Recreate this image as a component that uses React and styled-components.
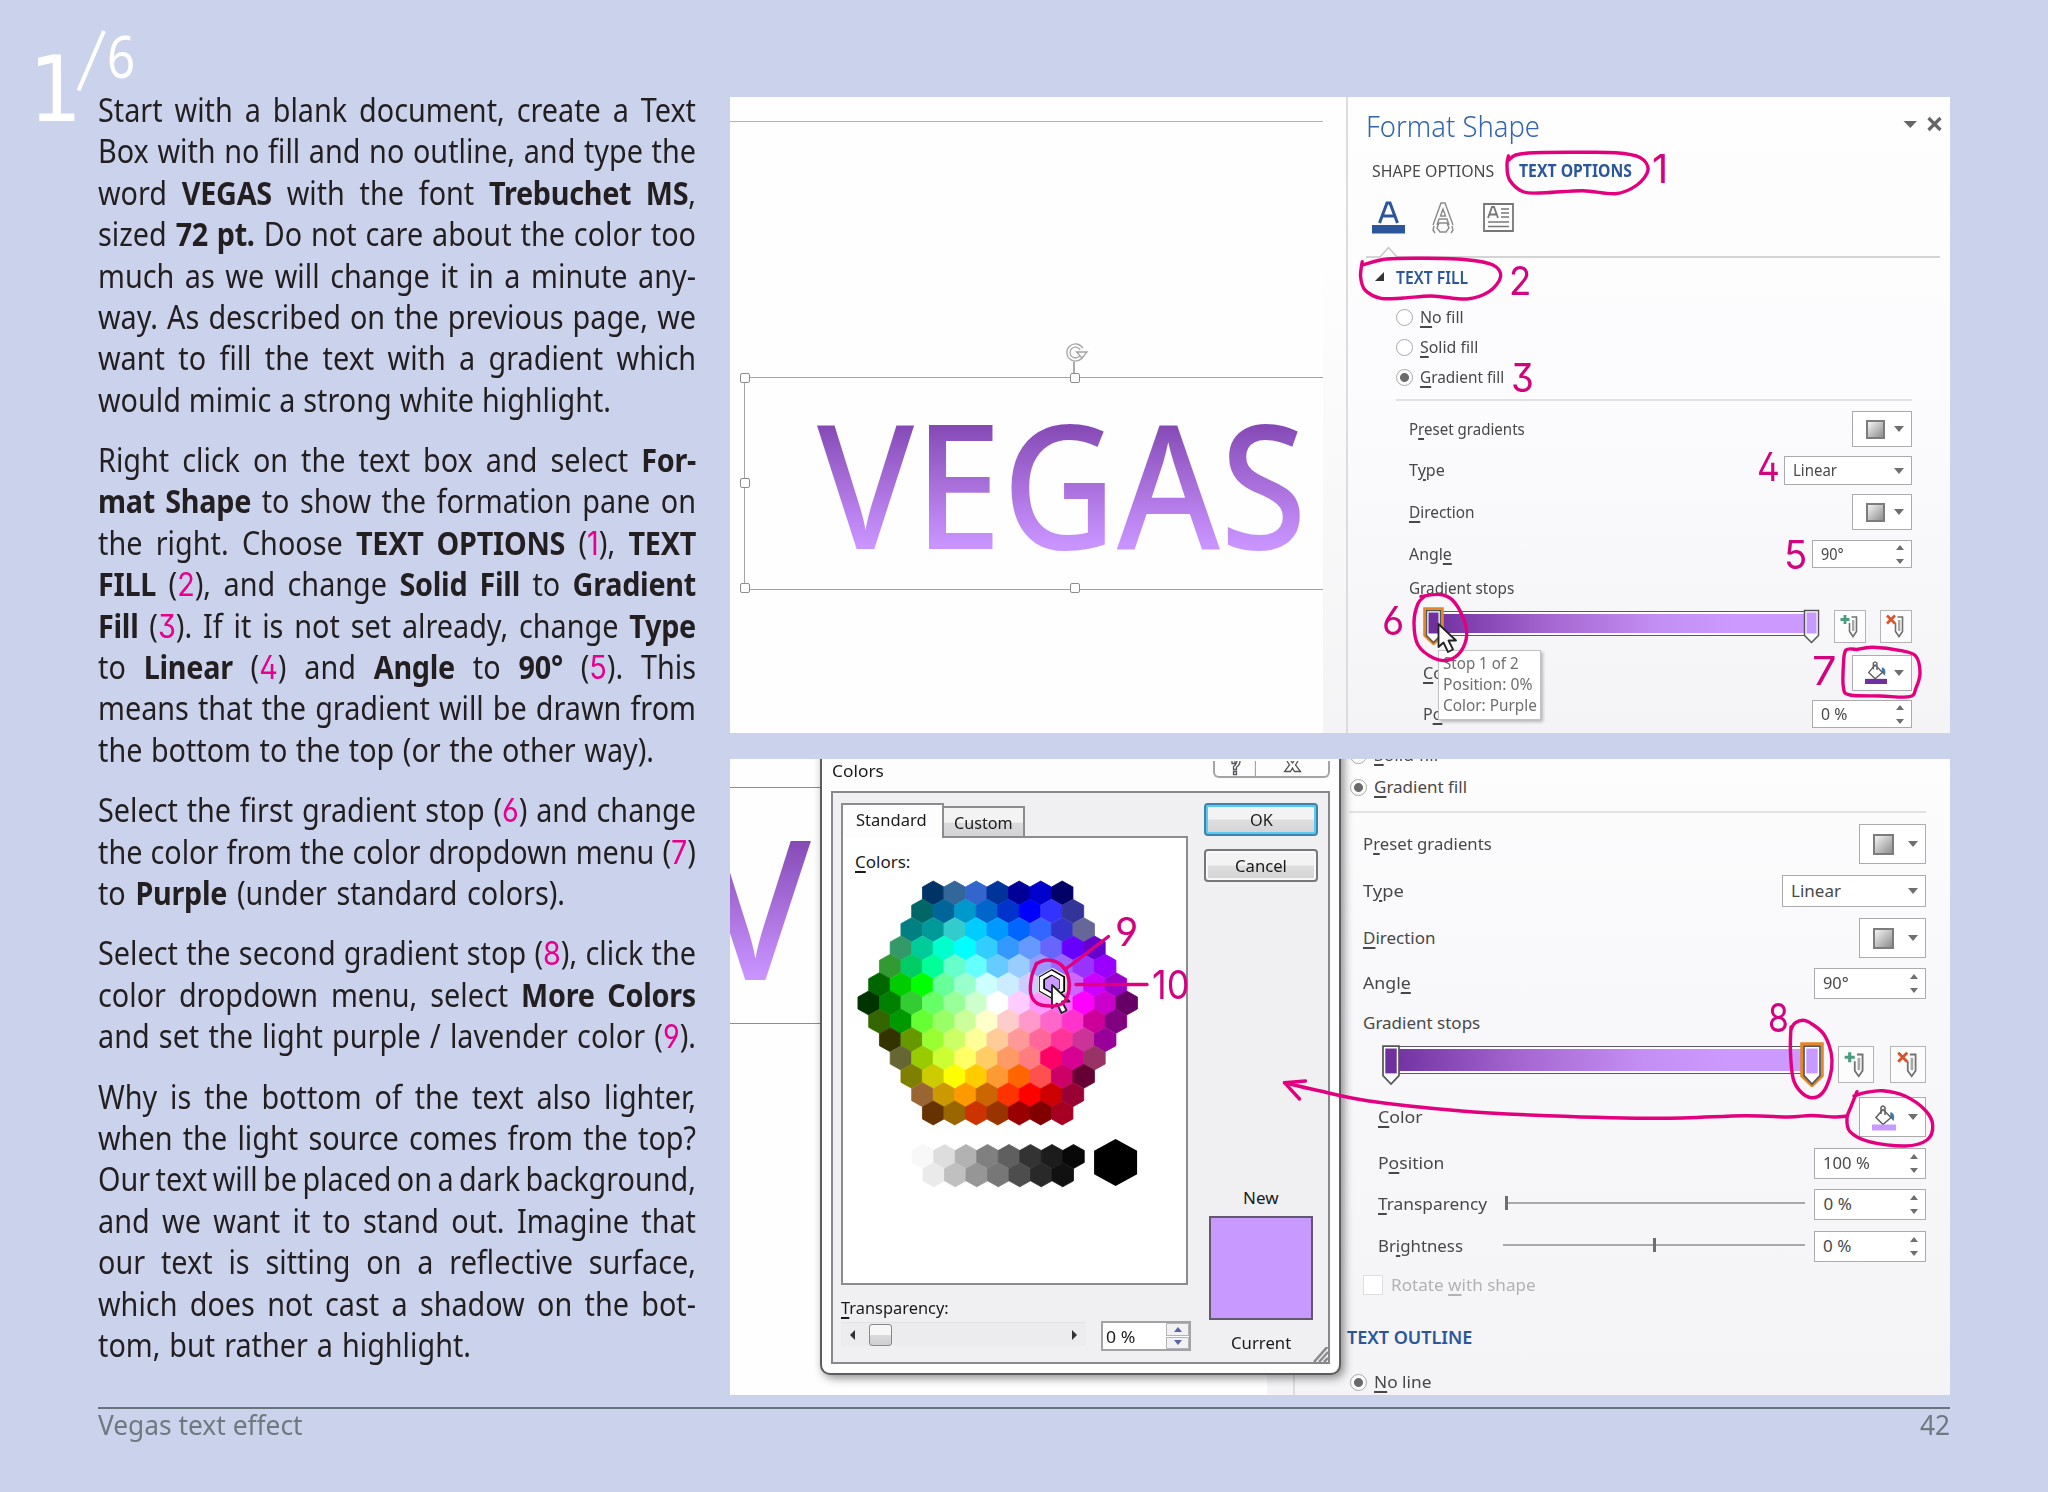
import React, { useLayoutEffect, useRef, useState } from 'react'
import styled, { createGlobalStyle } from 'styled-components'

const GlobalStyle = createGlobalStyle`
* { box-sizing: border-box; }
body {
    margin: 0;
    background: #cbd2ec;
    font-family: "Noto Sans", "Open Sans", sans-serif;
}
`

const ink = '#e3007f'

/* ---------- text helpers ---------- */

const FitBox = styled.span`
display: inline-block;
width: ${p => p.$w}px;
white-space: nowrap;
flex: none;
`
const FitInner = styled.span`
display: inline-block;
transform-origin: 0 50%;
`

// squeezes or stretches its text to the given width
const Fit = ({ w, children }) => {
    const ref = useRef(null)
    const [scale, setScale] = useState(1)
    useLayoutEffect(() => {
        setScale(w / ref.current.offsetWidth)
    }, [w])
    return (
        <FitBox $w={w}>
            <FitInner ref={ref} style={{ transform: `scaleX(${scale})` }}>{children}</FitInner>
        </FitBox>
    )
}

const LineBox = styled.div`
height: 41.38px;
line-height: 41.38px;
white-space: nowrap;
text-align: justify;
text-align-last: justify;
word-spacing: -2.5px;
transform-origin: 0 50%;
b { letter-spacing: -.3px; }
`

// one justified line of the narrow body face
const Line = ({ w = 598, children }) => {
    const ref = useRef(null)
    const [scale, setScale] = useState(0.9)
    useLayoutEffect(() => {
        setScale(Math.min(0.9, w / (ref.current.offsetWidth + 1)))
    }, [w])
    return (
        <LineBox style={{ width: w / scale, transform: `scaleX(${scale})` }}>
            <span ref={ref}>{children}</span>
        </LineBox>
    )
}

/* ---------- page ---------- */

const Page = styled.div`
position: relative;
width: 2048px;
height: 1492px;
padding: 0 98px;
overflow: hidden;
`
const Spread = styled.div`
display: flex;
justify-content: space-between;
height: 1407px;
width: 1852px;
`
const Article = styled.div`
width: 598px;
padding-top: 89px;
font-size: 32px;
color: #231f20;
`
const Paragraph = styled.div`
margin-bottom: 19.1px;
`
const Num = styled.span`
font-family: "Inter", sans-serif;
font-weight: 400;
font-feature-settings: "ss01";
color: #e6008c;
`
const Figures = styled.div`
width: 1220px;
padding-top: 97px;
display: flex;
flex-direction: column;
gap: 26px;
`
const Figure = styled.div`
position: relative;
display: flex;
height: 636px;
overflow: hidden;
background: #fefefe;
color: #444;
font-size: 17px;
`
const Footer = styled.div`
display: flex;
justify-content: space-between;
width: 1852px;
border-top: 2px solid #66757c;
font-size: 28px;
line-height: 31px;
color: #6d7a80;
`
const StepNumber = styled.div`
position: absolute;
left: 29px;
top: 22px;
display: flex;
color: #fff;
`
const StepCurrent = styled.span`
font: 91px/106px "DejaVu Sans", sans-serif;
padding-top: 15px;
`
const StepSlash = styled.svg`
width: 30px;
height: 62px;
margin: 8px 0 0 -5px;
`
const StepTotal = styled.span`
font-size: 58px;
line-height: 64px;
margin: 2px 0 0 0;
`

/* ---------- document canvas ---------- */

const Canvas = styled.div`
position: relative;
width: ${p => p.$w}px;
flex: none;
`
const PageEdge = styled.div`
position: absolute;
left: 0;
right: 0;
top: ${p => p.$y}px;
height: 1px;
background: ${p => p.$dark ? '#8d8d8d' : '#b3b3b3'};
`
const TextFrame = styled.div`
position: absolute;
left: 14px;
top: 280px;
width: 579px;
height: 213px;
border: 1.5px solid #a4a4a4;
border-right: 0;
`
const Handle = styled.i`
position: absolute;
left: ${p => p.$x}px;
top: ${p => p.$y}px;
width: 10px;
height: 10px;
border: 1.5px solid #8c8c8c;
border-radius: 2px;
background: #fff;
`
const Rotate = styled.svg`
position: absolute;
left: 318px;
top: -37px;
width: 26px;
height: 37px;
`
const WordArt = styled.div`
position: absolute;
left: ${p => p.$x}px;
top: ${p => p.$y}px;
font-size: ${p => p.$size}px;
font-weight: 500;
line-height: 1;
white-space: nowrap;
${FitInner} {
    color: transparent;
    background: linear-gradient(#8549b6 17%, #8f55c0 27%, #b178e4 60%, #c994ff 87%);
    -webkit-background-clip: text;
    background-clip: text;
}
`
const Gutter = styled.div`
width: ${p => p.$w}px;
flex: none;
background: linear-gradient(#fefefe 25%, #f4f3f5);
`

/* ---------- format pane ---------- */

const Pane = styled.div`
flex: 1;
min-width: 0;
border-left: 2px solid #dcdcde;
padding: 0 ${p => p.$right}px 0 ${p => p.$left}px;
background: ${p => p.$low ? 'linear-gradient(#fdfdfd, #f9f8fb 30%, #f4f3f5)' : 'linear-gradient(#fefefe, #fcfbfd 45%, #f4f3f6)'};
`
const PaneBody = styled.div`
padding: ${p => p.$low ? '0 0 0 13px' : '0 28px 0 43px'};
`
const Row = styled.div`
display: flex;
align-items: center;
justify-content: ${p => p.$spread ? 'space-between' : 'flex-start'};
height: ${p => p.$h}px;
margin-top: ${p => p.$mt || 0}px;
padding-left: ${p => p.$in || 0}px;
gap: ${p => p.$gap || 0}px;
`
const Push = styled.div`
flex: 1;
`
const Title = styled.div`
font-size: 28.5px;
font-weight: 300;
color: #3565ae;
`
const TitleIcons = styled.svg`
width: 40px;
height: 24px;
margin-bottom: 5px;
overflow: visible;
`
const Section = styled.div`
margin-left: ${p => p.$ml || 0}px;
font-weight: 600;
font-size: ${p => p.$size || 17}px;
color: #2b579a;
`
const TabLabel = styled.div`
color: ${p => p.$on ? '#2b579a' : '#484848'};
font-weight: ${p => p.$on ? 700 : 400};
`
const Label = styled.div`
margin-bottom: 2px;
color: ${p => p.$off ? '#b2b2b4' : '#484848'};
u { text-underline-offset: 3px; text-decoration-thickness: 1.5px; }
`
const Radio = styled.i`
width: 17px;
height: 17px;
border: 1.5px solid #a9a9a9;
border-radius: 50%;
margin-right: 7px;
background: ${p => p.$on ? 'radial-gradient(#6a6a6a 0 4px, #fff 5px)' : '#fff'};
`
const Rule = styled.div`
height: 2px;
margin-top: ${p => p.$mt}px;
margin-left: ${p => p.$in}px;
background: #e2e2e4;
`
const Field = styled.div`
display: flex;
align-items: center;
justify-content: space-between;
width: ${p => p.$w}px;
height: 100%;
padding: 0 7px 0 8px;
border: 1.5px solid #ababad;
background: #fff;
color: ${p => p.$dark ? '#262626' : '#484848'};
`
const Arrow = styled.i`
width: 0;
height: 0;
border: 5px solid transparent;
border-top: 6px solid #6f6f6f;
border-bottom: 0;
`
const Spinner = styled.div`
display: flex;
flex-direction: column;
gap: 9px;
i { border-width: 4px; border-top-width: 5px; border-bottom: 0; }
i:first-child { transform: scaleY(-1); }
`
const Swatch = styled.i`
width: ${p => p.$s}px;
height: ${p => p.$s}px;
margin-left: 5px;
border: 2px solid #7c7c7e;
background: linear-gradient(135deg, #f4f4f4, #8e8e90);
`
const SquareButton = styled.div`
display: grid;
place-items: center;
flex: none;
width: ${p => p.$w}px;
height: ${p => p.$h}px;
border: 1.5px solid #b4b4b6;
background: #fcfcfd;
`
const Shift = styled.div`
margin-left: 4px;
height: 27px;
`
const Track = styled.div`
position: relative;
flex: none;
width: ${p => p.$w}px;
height: 100%;
`
const Ramp = styled.div`
margin: ${p => p.$y}px 8px 0;
height: ${p => p.$h}px;
border: 1.5px solid #5d5464;
padding: 2px 0;
background: linear-gradient(90deg, #7030a0, #a465d0 30%, #c48ff4 60%, #cc99ff 80%) content-box, #fff;
`
const Marker = styled.svg`
position: absolute;
top: 0;
${p => p.$end ? 'right: -3px;' : 'left: -2px;'}
width: ${p => p.$w}px;
height: 100%;
`
const SliderLine = styled.div`
position: relative;
width: 302px;
height: 2px;
background: #a9a9ab;
margin-bottom: 3px;
`
const SliderThumb = styled.i`
position: absolute;
left: ${p => p.$x}px;
top: -6px;
width: 2.5px;
height: 14px;
background: #6e6e70;
`
const CheckBox = styled.i`
width: 20px;
height: 20px;
margin-right: 8px;
border: 1.5px solid #dedee0;
background: #fff;
`
const Tooltip = styled.div`
position: absolute;
left: 708px;
top: 553px;
width: 103px;
height: 70px;
padding: 2px 4px;
border: 1.5px solid #c2c2c4;
background: #fff;
box-shadow: 2px 2px 3px rgba(0, 0, 0, .25);
color: #6e6e70;
font-size: 16.5px;
line-height: 20.8px;
`
const Overlay = styled.svg`
position: absolute;
inset: 0;
width: 1220px;
height: 636px;
`
const Digit = styled.span`
position: absolute;
left: ${p => p.$x - 730}px;
top: ${p => p.$y - p.$top}px;
font-family: "Inter", sans-serif;
font-feature-settings: "ss01";
font-size: 40px;
line-height: 29px;
font-weight: 400;
color: #d0047f;
`

/* ---------- colors dialog ---------- */

const Dialog = styled.div`
position: absolute;
left: 90px;
top: -20px;
width: 521px;
height: 636px;
border: 2px solid #5d5d60;
border-radius: 0 0 10px 10px;
padding: 20px 9px 9px;
background: #fdfdfe;
box-shadow: 3px 3px 10px rgba(0, 0, 0, .45);
display: flex;
flex-direction: column;
color: #1a1a1a;
`
const DialogHead = styled.div`
display: flex;
justify-content: space-between;
align-items: flex-start;
height: 30px;
padding-left: 1px;
line-height: 19px;
`
const CaptionButtons = styled.div`
display: grid;
grid-template-columns: 41px 72px;
height: 17px;
border: 2px solid #a4a4a7;
border-top: 0;
border-radius: 0 0 6px 6px;
svg { display: block; margin: 0 auto; }
`
const DialogBody = styled.div`
position: relative;
flex: 1;
display: flex;
justify-content: space-between;
padding: 10px 10px 0 8px;
border: 2px solid #88888c;
background: #f0eff1;
`
const LeftSide = styled.div`
width: 350px;
`
const Tabs = styled.div`
display: flex;
align-items: flex-end;
height: 33px;
`
const Tab = styled.div`
position: relative;
display: flex;
justify-content: center;
align-items: center;
width: ${p => p.$on ? 103 : 81}px;
height: ${p => p.$on ? 35 : 30}px;
margin-bottom: ${p => p.$on ? -2 : 0}px;
padding-bottom: ${p => p.$on ? 5 : 0}px;
padding-right: ${p => p.$on ? 2 : 0}px;
z-index: ${p => p.$on ? 1 : 0};
border: 2px solid #8c8c90;
border-bottom: 0;
border-left-width: ${p => p.$on ? 2 : 0}px;
background: ${p => p.$on ? '#fdfdfd' : 'linear-gradient(#f3f3f4 50%, #dadadc 55%, #d4d4d6)'};
`
const Palette = styled.div`
width: 347px;
height: 449px;
border: 2px solid #8c8c90;
background: #fff;
padding: 11px 12px;
`
const Honeycomb = styled.svg`
display: block;
width: 318px;
height: 318px;
margin-top: 2px;
`
const DialogLabel = styled.div`
height: 22px;
line-height: 22px;
margin-top: ${p => p.$mt || 0}px;
u { text-underline-offset: 3px; text-decoration-thickness: 1.5px; }
`
const RightSide = styled.div`
width: 114px;
display: flex;
flex-direction: column;
align-items: center;
`
const Button = styled.div`
display: flex;
justify-content: center;
align-items: center;
width: 114px;
height: 33px;
margin-bottom: 13px;
border: ${p => p.$primary ? '2px solid #3d83ad' : '2px solid #77777a'};
border-radius: 4px;
box-shadow: inset 0 0 0 2px ${p => p.$primary ? '#5bc9f0' : '#f8f8f9'};
background: linear-gradient(#f3f3f4 48%, #dededf 52%, #d3d3d5);
`
const Spacer = styled.div`
height: ${p => p.$h}px;
`
const CurrentColor = styled.div`
width: 104px;
height: 104px;
border: 2px solid #63576f;
background: #c899ff;
`
const ScrollRow = styled.div`
display: flex;
justify-content: space-between;
align-items: center;
height: 30px;
margin-top: 2px;
`
const Scroll = styled.div`
display: flex;
align-items: center;
width: 245px;
height: 24px;
padding: 0 9px;
margin-bottom: 4px;
background: #ecebed;
border-top: 1px solid #e2e1e3;
`
const ScrollThumb = styled.i`
width: 23px;
height: 22px;
margin-left: 14px;
border: 1.5px solid #88888b;
border-radius: 3px;
background: linear-gradient(#f6f6f7 48%, #d9d9db 52%, #cfcfd1);
`
const SideArrow = styled.i`
border: 5px solid transparent;
${p => p.$left ? 'border-right-color: #333; border-left: 0;' : 'border-left-color: #333; border-right: 0;'}
`
const NumberBox = styled.div`
display: flex;
justify-content: space-between;
align-items: center;
width: 90px;
height: 30px;
padding-left: 3px;
border: 2px solid #a2a2a6;
background: #fff;
`
const StepButtons = styled.div`
display: grid;
grid-template-rows: 1fr 1fr;
gap: 1px;
width: 23px;
height: 26px;
div {
    display: grid;
    place-items: center;
    border: 1.5px solid #b4b4b8;
    background: #f1f1f3;
}
i { border-top-color: #5a62a8; border-width: 4px; border-top-width: 5px; border-bottom: 0; }
div:first-child i { transform: scaleY(-1); }
`
const Grip = styled.svg`
position: absolute;
right: 0;
bottom: 0;
width: 15px;
height: 15px;
`

/* ---------- drawings ---------- */

// smooth pen stroke through a list of points
const stroke = (pts) => {
    let d = `M${pts[0]}`
    for (let i = 0; i < pts.length - 1; i++) {
        const a = pts[i - 1] || pts[i]
        const b = pts[i]
        const c = pts[i + 1]
        const e = pts[i + 2] || c
        d += `C${b[0] + (c[0] - a[0]) / 6},${b[1] + (c[1] - a[1]) / 6} ${c[0] - (e[0] - b[0]) / 6},${c[1] - (e[1] - b[1]) / 6} ${c}`
    }
    return d
}

const firstStrokes = [
    [[1508.4, 156], [1507, 165], [1509.6, 180], [1524, 192], [1546, 192.7], [1583, 190.7], [1615.7, 193.7], [1637, 185], [1648, 170], [1640, 157.5], [1615.7, 152.7], [1575, 152.3], [1534, 152.7], [1515.7, 155], [1509, 160]],
    [[1362.2, 261.7], [1360.6, 276.7], [1365, 290], [1381, 298.3], [1403.5, 298], [1432, 296], [1466.7, 299], [1489, 291.7], [1500.6, 276.7], [1493, 265], [1468.8, 260], [1428, 258.3], [1387, 259], [1364, 264.5]],
    [[1425, 596], [1417.8, 604], [1414, 623], [1418, 645], [1434, 658.3], [1448.4, 660], [1460.6, 651.7], [1466.7, 635], [1462.7, 616.7], [1452.4, 600], [1440, 594.5], [1421, 596.5]],
    [[1857, 649.5], [1846, 650], [1843.5, 663.3], [1843.5, 688], [1850, 695], [1881, 696], [1909.6, 696.7], [1916, 688], [1920, 673], [1915.7, 656], [1901, 650.7], [1873, 647.3], [1857, 649.5]],
]
const secondStrokes = [
    [[1791, 1027], [1790.4, 1050], [1793, 1078], [1800, 1091], [1811, 1097.7], [1822.4, 1093], [1830, 1076.7], [1832, 1060], [1829, 1045], [1821.8, 1031.7], [1805.5, 1020.7], [1795, 1023], [1791, 1030]],
    [[1857, 1091.7], [1851, 1106.7], [1847, 1118], [1850, 1131.7], [1869, 1141.7], [1905, 1146], [1927, 1140], [1932.7, 1125], [1925, 1110], [1905, 1096], [1882.7, 1090.7], [1865, 1092.7], [1854, 1096]],
    [[1847, 1116], [1835, 1117], [1811, 1115.5], [1788, 1117], [1744, 1115.7], [1659.5, 1118.3], [1548, 1115.7], [1458.6, 1110.7], [1369, 1101], [1315.7, 1090], [1284.5, 1082.7]],
    [[1036.7, 963.3], [1031.7, 976.7], [1030.7, 993.3], [1036.7, 1003], [1050, 1006], [1063, 1003], [1069, 990], [1067.7, 975], [1060, 964], [1046.7, 960], [1036, 964]],
]

const Pointer = ({ x, y }) => (
    <path
        d={`M${x},${y}v23l5,-4.500l4.500,9.500l5,-2.500l-4.500,-9h7.500z`}
        fill="#fff" stroke="#222" strokeWidth="1.8"
    />
)

const StopMarker = ({ color, on, end, w }) => (
    <Marker viewBox="0 0 21 38" preserveAspectRatio="none" $w={w} $end={end}>
        {on && <path d="M1.500,1.500h18v27l-9,8.500l-9,-8.500z" fill="#fff" stroke="#e2862a" strokeWidth="2.600" />}
        <path d="M3.500,3.500h14v25l-7,7l-7,-7z" fill="#fff" stroke="#555" strokeWidth="1.500" />
        <path d="M5.500,5.500h10v21h-10z" fill={color} />
    </Marker>
)

const ClipIcon = ({ remove, s }) => (
    <svg width={22 * s} height={26 * s} viewBox="0 0 22 26" fill="none" stroke="#717171" strokeWidth="1.600">
        <path d="M12.500,4h5v14.500l-3.500,5l-3.500,-5V10" />
        <path d="M14.200,7v11" stroke="#a9a9a9" strokeWidth="2.400" />
        {remove
            ? <path d="M2,2.500l8,8M10,2.500l-8,8" stroke="#d9532c" strokeWidth="2.600" />
            : <path d="M6,2v9M1.500,6.500h9" stroke="#4a9b7f" strokeWidth="2.800" />}
    </svg>
)

const BucketIcon = ({ color, s }) => (
    <svg width={24 * s} height={27 * s} viewBox="0 0 24 27" fill="none">
        <path d="M18.500,8c3.500,1 4.500,4.500 3,9c-2,-1.500 -3,-3 -3.300,-6z" fill="#3f77a8" />
        <path d="M11,5.500l8,8l-8,7l-7,-7z" fill="#fff" stroke="#5e5e60" strokeWidth="1.500" />
        <path d="M9,10V3.500q1.800,-3 4,0V11" stroke="#5e5e60" strokeWidth="1.500" />
        <path d="M0,20.500h24v6H0z" fill={color} />
    </svg>
)

const palette = [
    '003366 336699 3366cc 003399 000099 0000cc 000066',
    '006666 006699 0099cc 0066cc 0033cc 0000ff 3333ff 333399',
    '008080 009999 33cccc 00ccff 0099ff 0066ff 3366ff 3333cc 666699',
    '339966 00cc99 00ffcc 00ffff 33ccff 3399ff 6699ff 6666ff 6600ff 6600cc',
    '339933 00cc66 00ff99 66ffcc 66ffff 66ccff 99ccff 9999ff 9966ff 9933ff 9900ff',
    '006600 00cc00 00ff00 66ff99 99ffcc ccffff ccecff ccccff cc99ff cc66ff cc00ff 9900cc',
    '003300 008000 33cc33 66ff66 99ff99 ccffcc ffffff ffccff ff99ff ff66ff ff00ff cc00cc 660066',
    '336600 009900 66ff33 99ff66 ccff99 ffffcc ffcccc ff99cc ff66cc ff33cc cc0099 800080',
    '333300 669900 99ff33 ccff66 ffff99 ffcc99 ff9999 ff6699 ff3399 cc3399 990099',
    '666633 99cc00 ccff33 ffff66 ffcc66 ff9966 ff7c80 ff0066 d60093 993366',
    '808000 cccc00 ffff00 ffcc00 ff9933 ff6600 ff5050 cc0066 660033',
    '996633 cc9900 ff9900 cc6600 ff3300 ff0000 cc0000 990033',
    '663300 996600 cc3300 993300 990000 800000 a50021',
].map(row => row.split(' '))
const grays = [
    'f8f8f8 dddddd b2b2b2 808080 5f5f5f 333333 1c1c1c 080808'.split(' '),
    'eaeaea c0c0c0 969696 777777 4d4d4d 292929 111111'.split(' '),
]

const hexagon = (x, y, w, h) =>
    `${x},${y - h / 2} ${x + w / 2},${y - h / 4} ${x + w / 2},${y + h / 4} ${x},${y + h / 2} ${x - w / 2},${y + h / 4} ${x - w / 2},${y - h / 4}`

const Honey = () => (
    <Honeycomb viewBox="855 876 318 318">
        {palette.map((row, r) => row.map((c, i) => (
            <polygon
                key={r + '-' + i} fill={'#' + c} stroke={'#' + c} strokeWidth=".8"
                points={hexagon(997.7 + (i - (row.length - 1) / 2) * 21.5, 894 + r * 18.33, 21.5, 24)}
            />
        )))}
        {grays.map((row, r) => row.map((c, i) => (
            <polygon
                key={r + '-' + i} fill={'#' + c} stroke={'#' + c} strokeWidth=".8"
                points={hexagon(923 + r * 10.75 + i * 21.5, 1157.5 + r * 18.3, 21.5, 24)}
            />
        )))}
        <polygon points={hexagon(1115.6, 1163.5, 43, 47)} fill="#000" />
        <polygon points={hexagon(1052.5, 985, 24, 27)} fill="none" stroke="#d8d8d8" strokeWidth="5" />
        <polygon points={hexagon(1052, 985, 20, 23)} fill="#cc99ff" stroke="#000" strokeWidth="6" />
        <polygon points={hexagon(1051.5, 985, 20, 23)} fill="none" stroke="#fff" strokeWidth="3.500" />
    </Honeycomb>
)

/* ---------- rows shared by both panes ---------- */

const MenuButton = ({ w, s }) => (
    <Field $w={w}><Swatch $s={s} /><Arrow /></Field>
)
const SpinField = ({ w, tw, children }) => (
    <Field $w={w} $dark>
        <Label><Fit w={tw}>{children}</Fit></Label>
        <Spinner><Arrow /><Arrow /></Spinner>
    </Field>
)

const FirstPane = () => (
    <Pane $left={18} $right={10}>
        <Row $h={40} $mt={9}>
            <Title><Fit w={174}>Format Shape</Fit></Title>
            <Push />
            <TitleIcons viewBox="0 0 40 24">
                <path d="M3.500,9h13.500l-6.700,7z" fill="#666" />
                <path d="M28.500,6l12,12M40.500,6l-12,12" stroke="#666" strokeWidth="3.200" />
            </TitleIcons>
        </Row>
        <Row $h={30} $mt={9} $in={6} $gap={25}>
            <TabLabel><Fit w={122}>SHAPE OPTIONS</Fit></TabLabel>
            <TabLabel $on><Fit w={113}>TEXT OPTIONS</Fit></TabLabel>
        </Row>
        <Row $h={33} $mt={16} $in={6}>
            <svg width="145" height="33" viewBox="0 0 145 33" fill="none">
                <path d="M7.500,22L15,2h3l7.500,20M10.500,15h12" stroke="#2b579a" strokeWidth="3" />
                <path d="M0,24h33v8.500H0z" fill="#2b579a" />
                <path d="M61,24L69,2h4l8,22M65,24l2,-6h8l2,6M71,8l-2.500,7h5zM62,25l-1,4 2,3M80,25l1,4 -2,3M67,22h8l2,5 -3,4h-6l-3,-4z" stroke="#8a8a8c" strokeWidth="1.400" />
                <path d="M112,3h29v27h-29z" stroke="#777779" strokeWidth="1.800" />
                <path d="M116,17l4,-11h2l4,11M118,13.500h6" stroke="#777779" strokeWidth="1.800" />
                <path d="M129,8h8M129,12h8M129,16h8M116,21h21M116,25.500h21" stroke="#777779" strokeWidth="1.500" />
            </svg>
        </Row>
        <Row $h={12} $mt={12}>
            <svg width="574" height="12" fill="none" stroke="#c6c6c8" strokeWidth="1.500">
                <path d="M0,11h14l8.500,-9.500l8.500,9.500h543" />
            </svg>
        </Row>
        <Row $h={24} $mt={7} $in={9} $gap={11}>
            <svg width="10" height="10"><path d="M9,0v9H0z" fill="#333" /></svg>
            <Section><Fit w={72}>TEXT FILL</Fit></Section>
        </Row>
        <Row $h={30} $mt={13} $in={30}><Radio /><Label><Fit w={44}><u>N</u>o fill</Fit></Label></Row>
        <Row $h={30} $in={30}><Radio /><Label><Fit w={58}><u>S</u>olid fill</Fit></Label></Row>
        <Row $h={30} $in={30}><Radio $on /><Label><Fit w={84}><u>G</u>radient fill</Fit></Label></Row>
        <PaneBody>
            <Rule $mt={7} $in={-13} />
            <Row $h={36} $mt={10}>
                <Label><Fit w={116}>P<u>r</u>eset gradients</Fit></Label><Push /><MenuButton w={60} s={19} />
            </Row>
            <Row $h={29} $mt={9}>
                <Label><Fit w={36}>T<u>y</u>pe</Fit></Label><Push />
                <Field $w={128}><Label><Fit w={44}>Linear</Fit></Label><Arrow /></Field>
            </Row>
            <Row $h={36} $mt={9}>
                <Label><Fit w={66}><u>D</u>irection</Fit></Label><Push /><MenuButton w={60} s={19} />
            </Row>
            <Row $h={28} $mt={10}>
                <Label><Fit w={43}>Angl<u>e</u></Fit></Label><Push /><SpinField w={100} tw={23}>90°</SpinField>
            </Row>
            <Row $h={20} $mt={10}><Label><Fit w={105}>Gradient stops</Fit></Label></Row>
            <Row $h={38} $mt={9} $in={16} $spread>
                <Track $w={394}>
                    <Ramp $y={4} $h={25} />
                    <StopMarker color="#7030a0" on w={21} />
                    <StopMarker color="#c899ff" end w={21} />
                </Track>
                <SquareButton $w={32} $h={33}><ClipIcon s={1} /></SquareButton>
                <SquareButton $w={32} $h={33}><ClipIcon s={1} remove /></SquareButton>
            </Row>
            <Row $h={36} $mt={10} $in={14}>
                <Label><Fit w={41}><u>C</u>olor</Fit></Label><Push />
                <Field $w={60}><Shift><BucketIcon s={0.92} color="#7030a0" /></Shift><Arrow /></Field>
            </Row>
            <Row $h={28} $mt={9} $in={14}>
                <Label><Fit w={60}>P<u>o</u>sition</Fit></Label><Push /><SpinField w={100} tw={26}>0 %</SpinField>
            </Row>
        </PaneBody>
    </Pane>
)

const SecondPane = () => (
    <Pane $low $left={55} $right={24}>
        <Row $h={32} $mt={-20}><Radio /><Label><Fit w={64}><u>S</u>olid fill</Fit></Label></Row>
        <Row $h={32}><Radio $on /><Label><Fit w={93}><u>G</u>radient fill</Fit></Label></Row>
        <Rule $mt={8} $in={-1} />
        <PaneBody $low>
            <Row $h={40} $mt={11}>
                <Label><Fit w={129}>P<u>r</u>eset gradients</Fit></Label><Push /><MenuButton w={67} s={21} />
            </Row>
            <Row $h={32} $mt={11}>
                <Label><Fit w={41}>T<u>y</u>pe</Fit></Label><Push />
                <Field $w={144}><Label><Fit w={50}>Linear</Fit></Label><Arrow /></Field>
            </Row>
            <Row $h={40} $mt={11}>
                <Label><Fit w={73}><u>D</u>irection</Fit></Label><Push /><MenuButton w={67} s={21} />
            </Row>
            <Row $h={31} $mt={10}>
                <Label><Fit w={48}>Angl<u>e</u></Fit></Label><Push /><SpinField w={112} tw={26}>90°</SpinField>
            </Row>
            <Row $h={20} $mt={14}><Label><Fit w={117}>Gradient stops</Fit></Label></Row>
            <Row $h={45} $mt={9} $in={18} $spread>
                <Track $w={440}>
                    <Ramp $y={4} $h={28} />
                    <StopMarker color="#7030a0" w={24} />
                    <StopMarker color="#c899ff" on end w={24} />
                </Track>
                <SquareButton $w={36} $h={37}><ClipIcon s={1.12} /></SquareButton>
                <SquareButton $w={36} $h={37}><ClipIcon s={1.12} remove /></SquareButton>
            </Row>
            <Row $h={40} $mt={10} $in={15}>
                <Label><Fit w={45}><u>C</u>olor</Fit></Label><Push />
                <Field $w={67}><Shift><BucketIcon s={1} color="#c899ff" /></Shift><Arrow /></Field>
            </Row>
            <Row $h={31} $mt={11} $in={15}>
                <Label><Fit w={66}>P<u>o</u>sition</Fit></Label><Push /><SpinField w={112} tw={47}>100 %</SpinField>
            </Row>
            <Row $h={31} $mt={10} $in={15} $gap={9}>
                <Label><Fit w={109}><u>T</u>ransparency</Fit></Label><Push />
                <SliderLine><SliderThumb $x={0} /></SliderLine>
                <SpinField w={112} tw={28}>0 %</SpinField>
            </Row>
            <Row $h={31} $mt={11} $in={15} $gap={9}>
                <Label><Fit w={85}>Br<u>i</u>ghtness</Fit></Label><Push />
                <SliderLine><SliderThumb $x={150} /></SliderLine>
                <SpinField w={112} tw={28}>0 %</SpinField>
            </Row>
            <Row $h={20} $mt={13}>
                <CheckBox /><Label $off><Fit w={145}>Rotate <u>w</u>ith shape</Fit></Label>
            </Row>
        </PaneBody>
        <Row $h={24} $mt={30}><Section $size={18} $ml={-3}><Fit w={125}>TEXT OUTLINE</Fit></Section></Row>
        <Row $h={24} $mt={21}><Radio $on /><Label><Fit w={58}><u>N</u>o line</Fit></Label></Row>
    </Pane>
)

const ColorsDialog = () => (
    <Dialog>
        <DialogHead>
            <Fit w={52}>Colors</Fit>
            <CaptionButtons>
                <svg width="41" height="16" viewBox="0 0 41 16" fill="none" stroke="#55555a" strokeWidth="1.300">
                    <path d="M40.500,0v16" stroke="#a4a4a7" />
                    <path d="M17,0v2.500h3V0M25,0q0,4 -3.500,6v2.500h-3V5.500q3,-2 3.500,-5.500M18.500,10.500h3v3h-3z" />
                </svg>
                <svg width="40" height="16" viewBox="0 0 40 16" fill="none" stroke="#55555a" strokeWidth="1.300">
                    <path d="M15,0l2.500,4l-5,6.500h6l2,-3.500l2,3.500h6l-5,-6.500l2.500,-4M19,0l1.500,2l1.500,-2" />
                </svg>
            </CaptionButtons>
        </DialogHead>
        <DialogBody>
            <LeftSide>
                <Tabs>
                    <Tab $on><Fit w={71}>Standard</Fit></Tab>
                    <Tab><Fit w={59}>Custom</Fit></Tab>
                </Tabs>
                <Palette>
                    <DialogLabel $mt={2}><Fit w={55}><u>C</u>olors:</Fit></DialogLabel>
                    <Honey />
                </Palette>
                <DialogLabel $mt={12}><Fit w={108}><u>T</u>ransparency:</Fit></DialogLabel>
                <ScrollRow>
                    <Scroll><SideArrow $left /><ScrollThumb /><Push /><SideArrow /></Scroll>
                    <NumberBox>
                        <Fit w={29}>0 %</Fit>
                        <StepButtons><div><Arrow /></div><div><Arrow /></div></StepButtons>
                    </NumberBox>
                </ScrollRow>
            </LeftSide>
            <RightSide>
                <Button $primary><Fit w={23}>OK</Fit></Button>
                <Button><Fit w={52}>Cancel</Fit></Button>
                <Push />
                <DialogLabel><Fit w={36}>New</Fit></DialogLabel>
                <Spacer $h={7} />
                <CurrentColor />
                <Spacer $h={12} />
                <DialogLabel><Fit w={60}>Current</Fit></DialogLabel>
                <Spacer $h={8} />
            </RightSide>
            <Grip viewBox="0 0 15 15" stroke="#8c8c90" strokeWidth="2.500">
                <path d="M1,15L15,-1M6,15L15,5M11,15L15,11" />
            </Grip>
        </DialogBody>
    </Dialog>
)

const FirstFigure = () => (
    <Figure>
        <Canvas $w={593}>
            <PageEdge $y={24} />
            <TextFrame>
                <Rotate viewBox="0 0 26 37" fill="none" stroke="#a2a2a2">
                    <path d="M11,21v12" stroke="#8c8c8c" strokeWidth="1.500" />
                    <path d="M19,14A7,7 0 1 1 18.500,8" stroke="#a8a8a8" strokeWidth="4.500" />
                    <path d="M19,14A7,7 0 1 1 18.500,8" stroke="#fff" strokeWidth="1.800" />
                    <path d="M13.500,11h10.500l-5,6z" fill="#fff" strokeWidth="1.300" />
                </Rotate>
                <Handle $x={-5} $y={-5} />
                <Handle $x={325} $y={-5} />
                <Handle $x={-5} $y={100} />
                <Handle $x={-5} $y={205} />
                <Handle $x={325} $y={205} />
            </TextFrame>
            <WordArt $x={87} $y={299} $size={172}><Fit w={490}>VEGAS</Fit></WordArt>
        </Canvas>
        <Gutter $w={23} />
        <FirstPane />
        <Tooltip>
            <Fit w={76}>Stop 1 of 2</Fit>
            <Fit w={89}>Position: 0%</Fit>
            <Fit w={94}>Color: Purple</Fit>
        </Tooltip>
        <Overlay viewBox="730 97 1220 636" fill="none" stroke={ink} strokeWidth="3.400" strokeLinecap="round" strokeLinejoin="round">
            <Pointer x={1438.5} y={624} />
            {firstStrokes.map((pts, i) => <path key={i} d={stroke(pts)} />)}
        </Overlay>
        <Digit $top={97} $x={1652} $y={154}><Fit w={16}>1</Fit></Digit>
        <Digit $top={97} $x={1509} $y={266}><Fit w={22}>2</Fit></Digit>
        <Digit $top={97} $x={1511} $y={363}><Fit w={23}>3</Fit></Digit>
        <Digit $top={97} $x={1757} $y={452}><Fit w={23}>4</Fit></Digit>
        <Digit $top={97} $x={1784} $y={540}><Fit w={23}>5</Fit></Digit>
        <Digit $top={97} $x={1382} $y={606}><Fit w={22}>6</Fit></Digit>
        <Digit $top={97} $x={1812} $y={656}><Fit w={25}>7</Fit></Digit>
    </Figure>
)

const SecondFigure = () => (
    <Figure>
        <Canvas $w={537}>
            <PageEdge $y={28} $dark />
            <PageEdge $y={264} $dark />
            <WordArt $x={-30} $y={48} $size={195}><Fit w={111}>V</Fit></WordArt>
        </Canvas>
        <Gutter $w={26} />
        <SecondPane />
        <ColorsDialog />
        <Overlay viewBox="730 759 1220 636" fill="none" stroke={ink} strokeWidth="3.400" strokeLinecap="round" strokeLinejoin="round">
            <Pointer x={1052} y={985} />
            {secondStrokes.map((pts, i) => <path key={i} d={stroke(pts)} />)}
            <path d="M1305.500,1081L1284.500,1082.700L1299.500,1099" />
            <path d="M1065,969.500L1108.500,936.500M1076,984.500H1147" />
        </Overlay>
        <Digit $top={759} $x={1768} $y={1003}><Fit w={21}>8</Fit></Digit>
        <Digit $top={759} $x={1115} $y={917}><Fit w={23}>9</Fit></Digit>
        <Digit $top={759} $x={1152} $y={970}><Fit w={38}>10</Fit></Digit>
    </Figure>
)

export default function App() {
    return (
        <Page>
            <GlobalStyle />
            <Spread>
                <Article>
                    <Paragraph>
                        <Line>Start with a blank document, create a Text</Line>
                        <Line>Box with no fill and no outline, and type the</Line>
                        <Line>word <b>VEGAS</b> with the font <b>Trebuchet MS</b>,</Line>
                        <Line>sized <b>72 pt.</b> Do not care about the color too</Line>
                        <Line>much as we will change it in a minute any-</Line>
                        <Line>way. As described on the previous page, we</Line>
                        <Line>want to fill the text with a gradient which</Line>
                        <Line w={513}>would mimic a strong white highlight.</Line>
                    </Paragraph>
                    <Paragraph>
                        <Line>Right click on the text box and select <b>For-</b></Line>
                        <Line><b>mat Shape</b> to show the formation pane on</Line>
                        <Line>the right. Choose <b>TEXT OPTIONS</b> (<Num>1</Num>), <b>TEXT</b></Line>
                        <Line><b>FILL</b> (<Num>2</Num>), and change <b>Solid Fill</b> to <b>Gradient</b></Line>
                        <Line><b>Fill</b> (<Num>3</Num>). If it is not set already, change <b>Type</b></Line>
                        <Line>to <b>Linear</b> (<Num>4</Num>) and <b>Angle</b> to <b>90°</b> (<Num>5</Num>). This</Line>
                        <Line>means that the gradient will be drawn from</Line>
                        <Line w={556}>the bottom to the top (or the other way).</Line>
                    </Paragraph>
                    <Paragraph>
                        <Line>Select the first gradient stop (<Num>6</Num>) and change</Line>
                        <Line>the color from the color dropdown menu (<Num>7</Num>)</Line>
                        <Line w={467}>to <b>Purple</b> (under standard colors).</Line>
                    </Paragraph>
                    <Paragraph>
                        <Line>Select the second gradient stop (<Num>8</Num>), click the</Line>
                        <Line>color dropdown menu, select <b>More Colors</b></Line>
                        <Line>and set the light purple / lavender color (<Num>9</Num>).</Line>
                    </Paragraph>
                    <Paragraph>
                        <Line>Why is the bottom of the text also lighter,</Line>
                        <Line>when the light source comes from the top?</Line>
                        <Line>Our text will be placed on a dark background,</Line>
                        <Line>and we want it to stand out. Imagine that</Line>
                        <Line>our text is sitting on a reflective surface,</Line>
                        <Line>which does not cast a shadow on the bot-</Line>
                        <Line w={373}>tom, but rather a highlight.</Line>
                    </Paragraph>
                </Article>
                <Figures>
                    <FirstFigure />
                    <SecondFigure />
                </Figures>
            </Spread>
            <Footer>
                <Fit w={205}>Vegas text effect</Fit>
                <Fit w={30}>42</Fit>
            </Footer>
            <StepNumber>
                <StepCurrent><Fit w={53}>1</Fit></StepCurrent>
                <StepSlash viewBox="0 0 30 62"><path d="M1.500,60.500L27,1" stroke="#fff" strokeWidth="4" /></StepSlash>
                <StepTotal><Fit w={28}>6</Fit></StepTotal>
            </StepNumber>
        </Page>
    )
}
